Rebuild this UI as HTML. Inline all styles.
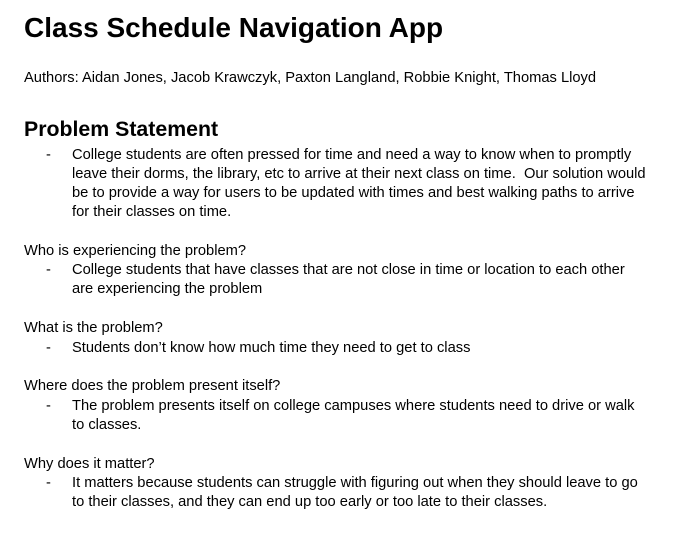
<!DOCTYPE html>
<html><head><meta charset="utf-8"><style>
html,body{margin:0;padding:0;background:#fff;}
body{width:677px;height:556px;position:relative;overflow:hidden;font-family:"Liberation Sans",Arial,sans-serif;color:#000;}
.l{position:absolute;white-space:nowrap;font-size:14.7px;line-height:19px;}
.t{position:absolute;left:24px;top:12px;font-size:28px;font-weight:bold;white-space:nowrap;}
.h{position:absolute;left:24px;top:117px;font-size:21.3px;font-weight:bold;white-space:nowrap;}
.d{position:absolute;left:46px;font-size:14.7px;line-height:19px;}
</style></head><body>
<div class="t">Class Schedule Navigation App</div>
<div class="l" style="left:24px;top:69px">Authors: Aidan Jones, Jacob Krawczyk, Paxton Langland, Robbie Knight, Thomas Lloyd</div>
<div class="h">Problem Statement</div>
<div class="d" style="top:146px">-</div>
<div class="l" style="left:72px;top:146px">College students are often pressed for time and need a way to know when to promptly</div>
<div class="l" style="left:72px;top:165px">leave their dorms, the library, etc to arrive at their next class on time.&nbsp; Our solution would</div>
<div class="l" style="left:72px;top:184px">be to provide a way for users to be updated with times and best walking paths to arrive</div>
<div class="l" style="left:72px;top:203px">for their classes on time.</div>
<div class="l" style="left:24px;top:242px">Who is experiencing the problem?</div>
<div class="d" style="top:261px">-</div>
<div class="l" style="left:72px;top:261px">College students that have classes that are not close in time or location to each other</div>
<div class="l" style="left:72px;top:280px">are experiencing the problem</div>
<div class="l" style="left:24px;top:319px">What is the problem?</div>
<div class="d" style="top:339px">-</div>
<div class="l" style="left:72px;top:339px">Students don’t know how much time they need to get to class</div>
<div class="l" style="left:24px;top:377px">Where does the problem present itself?</div>
<div class="d" style="top:397px">-</div>
<div class="l" style="left:72px;top:397px">The problem presents itself on college campuses where students need to drive or walk</div>
<div class="l" style="left:72px;top:416px">to classes.</div>
<div class="l" style="left:24px;top:455px">Why does it matter?</div>
<div class="d" style="top:474px">-</div>
<div class="l" style="left:72px;top:474px">It matters because students can struggle with figuring out when they should leave to go</div>
<div class="l" style="left:72px;top:493px">to their classes, and they can end up too early or too late to their classes.</div>
</body></html>
